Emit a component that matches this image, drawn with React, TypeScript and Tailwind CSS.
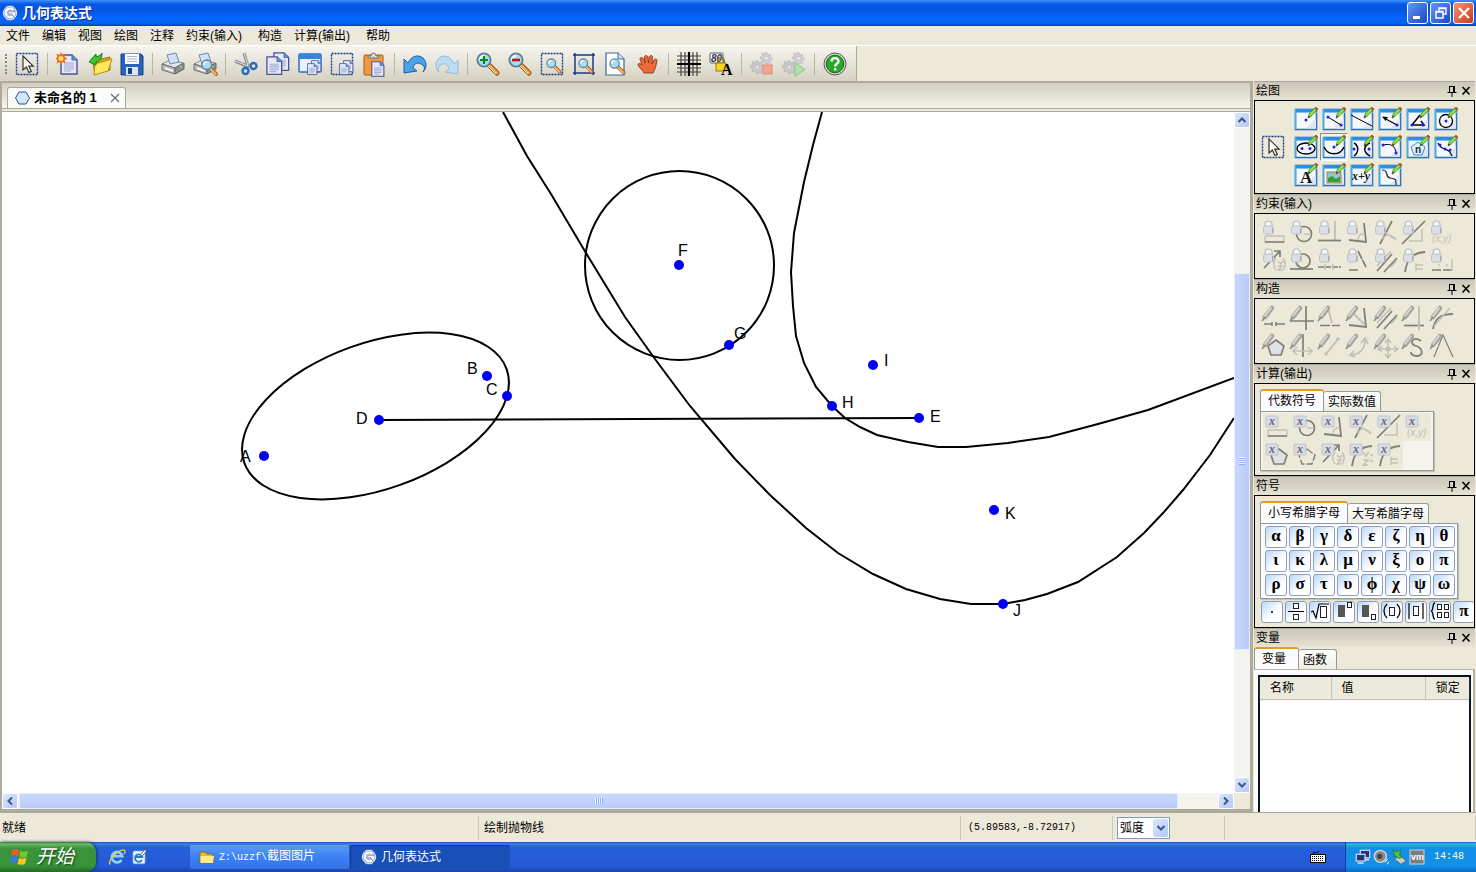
import type { ReactNode } from "react";
import { useState } from "react";

const menus = ["文件", "编辑", "视图", "绘图", "注释", "约束(输入)", "构造", "计算(输出)", "帮助"];

const greek = "αβγδεζηθικλμνξοπρστυϕχψω".split("");

const points = [
  { name: "A", x: 264, y: 456, lx: 240, ly: 462 },
  { name: "B", x: 487, y: 376, lx: 467, ly: 374 },
  { name: "C", x: 507, y: 396, lx: 486, ly: 395 },
  { name: "D", x: 379, y: 420, lx: 356, ly: 424 },
  { name: "E", x: 919, y: 418, lx: 930, ly: 422 },
  { name: "F", x: 679, y: 265, lx: 678, ly: 256 },
  { name: "G", x: 729, y: 345, lx: 734, ly: 339 },
  { name: "H", x: 832, y: 406, lx: 842, ly: 408 },
  { name: "I", x: 873, y: 365, lx: 884, ly: 366 },
  { name: "J", x: 1003, y: 604, lx: 1013, ly: 616 },
  { name: "K", x: 994, y: 510, lx: 1005, ly: 519 },
];

const parabola =
  "503,112 527,156 551,194 586,253 625,317 655,359 690,406 735,459 770,495 806,528 838,553 873,574 906,589 940,599 971,604 1003,604 1025,600 1047,594 1078,582 1117,557 1144,533 1164,512 1183,490 1210,455 1234,418";
const hyperbola =
  "822,112 813,145 804,182 794,233 791,272 793,306 796,336 804,363 816,387 832,406 845,418 860,427 877,435 908,442 938,447 966,447 1008,443 1049,437 1098,424 1148,410 1234,378";

/* ---------- shared icon pieces ---------- */

function Svg({ children, size = 24 }: { children: ReactNode; size?: number }) {
  return (
    <svg width={size} height={size} viewBox="0 0 24 24" fill="none" className="shrink-0 overflow-visible">
      {children}
    </svg>
  );
}

const Arrow = () => (
  <path d="M8 4v14l3.4-3 2.6 5.5 2.3-1.1-2.5-5.3h4.4z" fill="#fff" stroke="#333" strokeWidth="1.2" />
);

const Dashed = () => (
  <rect x="1.5" y="1.5" width="21" height="21" stroke="#1b3a86" strokeWidth="1.4" strokeDasharray="2 1" />
);

const Page = ({ x = 0, y = 0, s = 1 }: { x?: number; y?: number; s?: number }) => (
  <g transform={`translate(${x} ${y}) scale(${s})`}>
    <path d="M1 1h11l5 5v14H1z" fill="#e4e8f8" stroke="#4a5296" strokeWidth="1.4" />
    <path d="M12 1v5h5" fill="#5b9be0" stroke="#4a60a0" />
    <path d="M4 9h10M4 11h10M4 13h10M4 15h10M4 17h7" stroke="#a2abd4" strokeWidth="1.2" />
  </g>
);

const Lens = ({ x = 0, y = 0, s = 1 }: { x?: number; y?: number; s?: number }) => (
  <g transform={`translate(${x} ${y}) scale(${s})`}>
    <path d="M12 12l9 9" stroke="#8a4a14" strokeWidth="5" strokeLinecap="round" />
    <path d="M13 13l8 8" stroke="#f8a650" strokeWidth="3" strokeLinecap="round" />
    <path d="M12 14l8 8" stroke="#fff0d8" strokeWidth="1" />
    <circle cx="8" cy="8" r="6.6" fill="#a8dcf4" stroke="#5f7f98" strokeWidth="1.8" />
    <path d="M4 8a4 4 0 0 1 4-4" stroke="#fff" strokeWidth="2" />
  </g>
);

const Printer = () => (
  <>
    <path d="M1 12l8-4 13 3-8 5z" fill="#e6e6e6" stroke="#888" />
    <path d="M6 3l9-2 3 9-9 2z" fill="#cfe2fb" stroke="#7088b0" />
    <path d="M1 12l13 4v6L1 18z" fill="#bcbcbc" stroke="#707070" />
    <path d="M14 16l9-5v6l-9 5z" fill="#8e8e8e" stroke="#666" />
    <path d="M4 16l8 3" stroke="#fff" strokeWidth="1.5" />
    <circle cx="19.5" cy="14.5" r="1" fill="#6f6" />
  </>
);

const gearPath = "M8 1h2l.5 2 2 1 1.800-1 1.200 1.200-1 2 .8 2 2.200.6v2l-2.200.5-.8 2 1 2-1.300 1.200-1.900-1-1.900.8L10 17H8l-.6-2.200-2-.8-1.900 1-1.300-1.300 1-1.900-.8-2L.5 9.300v-2l2-.6.8-2-1-1.800 1.300-1.200 1.900 1 2-.8z";

const Gears = ({ children }: { children: ReactNode }) => (
  <>
    <g transform="translate(0 8) scale(.8)" fillRule="evenodd">
      <path d={`${gearPath} M9 6a3 3 0 1 0 .1 0z`} fill="#c9c9cd" stroke="#b2b2b8" />
    </g>
    <g transform="translate(10 0) scale(.7)" fillRule="evenodd">
      <path d={`${gearPath} M9 6a3 3 0 1 0 .1 0z`} fill="#d0d0d4" stroke="#b8b8be" />
    </g>
    {children}
  </>
);

const Logo = ({ size = 16 }: { size?: number }) => (
  <Svg size={size}>
    <path d="M7 1h10l6 11-6 11H7L1 12z" fill="#8ea3c8" />
    <circle cx="12" cy="12" r="10" fill="#9fb2d2" stroke="#dfe7f4" strokeWidth="1.500" />
    <path d="M17 7.500a6.500 6.500 0 1 0 1.500 5h-5l6 6" stroke="#fff" strokeWidth="3" />
    <path d="M13 12l6 7" stroke="#5c7298" strokeWidth="1.500" />
  </Svg>
);

/* ---------- main toolbar ---------- */

const toolGroups: { label: string; icon: ReactNode }[][] = [
  [{ label: "选择", icon: <><Dashed /><Arrow /></> }],
  [
    {
      label: "新建",
      icon: (
        <>
          <Page x={4} y={2} />
          <path d="M5 0l1.500 3L9.500 1.500 8.500 5l3 1.500-3 1.500 1 3.500-3-1.500L5 13l-1.500-3L.5 11.500l1-3.500-2-1.500 2-1.500-1-3.500 3 1.500z" fill="#f26a1c" />
          <circle cx="5" cy="6.500" r="2.500" fill="#ffe46a" />
        </>
      ),
    },
    {
      label: "打开",
      icon: (
        <>
          <path d="M4 7l7-2 2 2 9-2v13l-15 4z" fill="#d9a514" stroke="#a77a10" />
          <path d="M7 12l17-5-4 12-14 4z" fill="#fdea5c" stroke="#b98f18" />
          <path d="M1 10L8 2v3c3-1 5-2 6-4 0 6-2 8-6 9v3z" fill="#3ec42c" stroke="#1d7d16" />
        </>
      ),
    },
    {
      label: "保存",
      icon: (
        <>
          <path d="M1 2h20l2 2v19H1z" fill="#2a62bc" stroke="#173f86" />
          <path d="M5 2h14v10H5z" fill="#fafcff" />
          <path d="M7 4.500h10M7 7h10M7 9.500h10" stroke="#a8b4c8" />
          <path d="M6 15h12v8H6z" fill="#dbe6f6" />
          <path d="M8 16h4v6H8z" fill="#1b3f86" />
        </>
      ),
    },
  ],
  [
    { label: "打印", icon: <Printer /> },
    { label: "打印预览", icon: <><Printer /><Lens x={8} y={7} s={0.72} /></> },
  ],
  [
    {
      label: "剪切",
      icon: (
        <>
          <path d="M10 1l4 14M1 9l14 6" stroke="#83878e" strokeWidth="3" />
          <path d="M10 1l4 13M1 9l13 5" stroke="#e4e6ea" strokeWidth="1" />
          <circle cx="11.500" cy="19" r="3" stroke="#2b6cba" strokeWidth="2.400" />
          <circle cx="19.500" cy="14" r="3" stroke="#2b6cba" strokeWidth="2.400" />
        </>
      ),
    },
    { label: "复制", icon: <><Page x={7} y={0} s={0.92} /><Page x={0} y={4} s={0.92} /></> },
    {
      label: "复制窗口",
      icon: (
        <>
          <rect x="1" y="2" width="22" height="18" rx="1" fill="#eaf2fd" stroke="#2c6fc0" strokeWidth="1.500" />
          <path d="M1 2h22v5H1z" fill="#2f86dc" />
          <Page x={13} y={8} s={0.58} /><Page x={9} y={11} s={0.58} />
        </>
      ),
    },
    { label: "复制区域", icon: <><Dashed /><Page x={13} y={8} s={0.58} /><Page x={9} y={11} s={0.58} /></> },
    {
      label: "粘贴",
      icon: (
        <>
          <rect x="2" y="3" width="19" height="20" rx="1" fill="#f19a3c" stroke="#a65d16" />
          <path d="M6 6V4h3a2.500 3 0 0 1 5 0h3v2z" fill="#d8dadd" stroke="#777" />
          <Page x={9} y={9} s={0.76} />
        </>
      ),
    },
  ],
  [
    { label: "撤消", icon: <path d="M1 7v14l13-2-4-3c1-5 5-7 11-2 1 2 0 5-1 6 4-4 4-10 0-14-5-4-12-2-15 5z" fill="#4aa4ec" stroke="#1c5da6" /> },
    { label: "重做", icon: <path d="M23 8v14l-13-2 4-3c-1-5-5-7-10-3-1 2-1 5 0 6-4-4-4-10 0-14 5-4 12-2 15 6z" fill="#bcdcf4" stroke="#94bcdc" /> },
  ],
  [
    { label: "放大", icon: <><Lens /><path d="M8 4v8M4 8h8" stroke="#0b8a10" strokeWidth="2.200" /></> },
    { label: "缩小", icon: <><Lens /><path d="M4 8h8" stroke="#c81414" strokeWidth="2.600" /></> },
    { label: "缩放区域", icon: <><Dashed /><Lens x={6} y={6} s={0.66} /></> },
    {
      label: "缩放所选",
      icon: (
        <>
          <path d="M3 1v22M21 1v22M1 3h22M1 21h22" stroke="#1b3a86" strokeWidth="1.500" />
          <Lens x={6} y={6} s={0.66} />
        </>
      ),
    },
    {
      label: "缩放页面",
      icon: (
        <>
          <path d="M2 1h12l6 6v16H2z" fill="#fff" stroke="#3b66a8" strokeWidth="1.200" />
          <path d="M14 1v6h6" fill="#d6e5f8" stroke="#3b66a8" />
          <Lens x={5} y={6} s={0.7} />
        </>
      ),
    },
    {
      label: "平移",
      icon: (
        <path
          d="M8 21c-1-3-5-5-6-8 0-2 2-2 4 0L4 7c0-2 2.500-2 3.500 0L9 11 8.500 5c0-2 3-2 3.500 0l.5 6 1-6c.5-2 3-2 3 0L16 12l2-4c1-2 3-1 3 .5-1 6-2 9-4 12.500z"
          fill="#ec6a38" stroke="#7a2c10" strokeWidth=".8"
        />
      ),
    },
  ],
  [
    {
      label: "网格",
      icon: (
        <>
          <path d="M4 0v24M8 0v24M16 0v24M20 0v24M0 4h24M0 8h24M0 16h24M0 20h24" stroke="#444" strokeWidth="1.200" />
          <path d="M12 0v24M0 12h24" stroke="#000" strokeWidth="2.200" />
        </>
      ),
    },
    {
      label: "锁定标签",
      icon: (
        <>
          <rect x="1" y="1" width="13" height="10" rx="1" fill="#fff" stroke="#555e74" />
          <text x="2" y="10" fontSize="10" fontStyle="italic" fontWeight="bold" fontFamily="Liberation Sans, sans-serif" fill="#263248">80</text>
          <path d="M9 12V9a3 3 0 0 1 6 0v3" stroke="#8c7a14" strokeWidth="1.800" />
          <rect x="7" y="11" width="10" height="8" fill="#fbd420" stroke="#9a7a10" />
          <text x="12" y="23" fontSize="16" fontWeight="bold" fontFamily="Liberation Serif, serif" fill="#000">A</text>
        </>
      ),
    },
  ],
  [
    { label: "停止", icon: <Gears><rect x="13" y="13" width="9" height="9" fill="#f4a594" stroke="#e08a78" /></Gears> },
    { label: "运行", icon: <Gears><path d="M13 11l10 6.500L13 24z" fill="#b2e4b0" stroke="#86c486" /></Gears> },
  ],
  [
    {
      label: "帮助",
      icon: (
        <>
          <circle cx="12" cy="12" r="11" fill="#d5d5d5" stroke="#5c5c5c" />
          <circle cx="12" cy="12" r="8.800" fill="#2aa828" stroke="#176a17" />
          <path d="M8.500 9.500c0-4.500 7-4.500 7-.3 0 2.500-3.300 2.500-3.300 5.300M12.200 16v2.500" stroke="#fff" strokeWidth="2.400" />
        </>
      ),
    },
  ],
];

function Toolbar() {
  return (
    <div className="flex h-9 shrink-0 border-t border-white">
      <div className="flex items-center border-r border-[#aca899] bg-gradient-to-b from-[#f6f5ef] to-[#d6d2c2] pr-[5px]">
        <div className="flex w-[11px] justify-center">
          <span className="h-5 border-l-2 border-dotted border-[#8e8b7c]" />
        </div>
        {toolGroups.map((group, i) => (
          <div key={i} className="flex items-center">
            {i > 0 && (
              <div className="flex w-[9px] justify-center">
                <span className="h-[22px] w-px bg-[#bab6a6]" />
              </div>
            )}
            {group.map((t) => (
              <button key={t.label} type="button" aria-label={t.label} className="flex h-8 w-8 items-center justify-center">
                <Svg>{t.icon}</Svg>
              </button>
            ))}
          </div>
        ))}
      </div>
    </div>
  );
}

/* ---------- tool panels ---------- */

function PanelHeader({ title }: { title: string }) {
  return (
    <div className="flex h-[19px] shrink-0 items-center justify-between border-t border-[#aca899] bg-gradient-to-b from-[#cbc7b8] to-[#e6e3d3] pr-[3px] pl-[2px]">
      <h2 className="text-xs leading-4">{title}</h2>
      <div className="flex gap-[2px]">
        <button type="button" aria-label={`固定${title}`}>
          <svg width="12" height="12" viewBox="0 0 12 12" fill="none">
            <path d="M3 1.500h6M3.500 1v6M1.500 7.500h9M6 8v4" stroke="#000" />
            <path d="M8 1v6" stroke="#000" strokeWidth="2" />
          </svg>
        </button>
        <button type="button" aria-label={`关闭${title}`}>
          <svg width="12" height="12" viewBox="0 0 12 12" fill="none">
            <path d="M2.500 2l7 7.500M9.500 2l-7 7.500" stroke="#000" strokeWidth="1.600" />
          </svg>
        </button>
      </div>
    </div>
  );
}

function Tabs({ names, active, onPick }: { names: string[]; active: number; onPick: (i: number) => void }) {
  return (
    <div role="tablist" className="flex items-end text-xs leading-4">
      {names.map((n, i) => (
        <button
          key={n}
          type="button"
          role="tab"
          aria-selected={i === active}
          onClick={() => onPick(i)}
          className={
            i === active
              ? "h-[22px] min-w-[45px] rounded-t-[3px] border-x border-t-2 border-x-[#919b9c] border-t-[#e99a24] bg-[#fcfcfe] px-[7px] text-left"
              : "h-5 min-w-[38px] rounded-t-[3px] border border-b-0 border-l-0 border-[#919b9c] bg-gradient-to-b from-white to-[#eeede4] px-1 text-left"
          }
        >
          {n}
        </button>
      ))}
    </div>
  );
}

const Pencil = () => (
  <>
    <path d="M14 11l1.500-5L22 0l2 2-6 6.500z" fill="#8fdc4c" stroke="#3c8a1c" strokeWidth=".8" />
    <path d="M20.500 1.500L22 0l2 2-1.500 1.700z" fill="#d44a2c" />
    <path d="M14 11l.8-2.500 1.500 1.400z" fill="#333" />
  </>
);

const Dot = ({ x, y }: { x: number; y: number }) => <circle cx={x} cy={y} r="1.500" fill="#2222e0" />;

const drawTools: { label: string; icon: ReactNode }[] = [
  { label: "点", icon: <Dot x={12} y={13} /> },
  { label: "线段", icon: <><path d="M6 10l13 8" stroke="#000" /><Dot x={6} y={10} /><Dot x={19} y={18} /></> },
  { label: "直线", icon: <path d="M1 8l21 11" stroke="#000" /> },
  { label: "向量", icon: <><path d="M6 11l13 7" stroke="#000" strokeWidth="1.300" /><path d="M4 9.500l6 .5-2.500 4z" fill="#000" /><Dot x={19} y={18} /></> },
  { label: "多边形", icon: <><path d="M14 8L6 18h12l-3-4" stroke="#000" strokeWidth="1.500" /><Dot x={6} y={18} /><Dot x={17} y={18} /></> },
  { label: "圆", icon: <><circle cx="12" cy="14" r="6.500" stroke="#000" strokeWidth="1.300" /><Dot x={12} y={14} /></> },
  { label: "椭圆", icon: <><ellipse cx="12" cy="13.500" rx="9" ry="5.500" stroke="#000" strokeWidth="1.300" /><Dot x={8} y={13.5} /><Dot x={16} y={13.5} /></> },
  { label: "抛物线", icon: <><path d="M2 12c4 9 16 9 20 0" stroke="#000" strokeWidth="1.500" /><Dot x={12} y={12} /></> },
  { label: "双曲线", icon: <><path d="M4 8c5 3 5 9 0 13M20 8c-7 3-7 9 0 13" stroke="#000" strokeWidth="1.500" /><Dot x={4} y={14} /><Dot x={19} y={14} /></> },
  { label: "圆弧", icon: <><path d="M5 10c8-2 13 1 13 9" stroke="#000" /><Dot x={5} y={10} /><Dot x={18} y={18} /></> },
  {
    label: "正多边形",
    icon: (
      <>
        <path d="M12 7l7 5-3 8H8l-3-8z" fill="#dff4ff" stroke="#2a8cc8" />
        <text x="9" y="18" fontSize="10" fontWeight="bold" fontFamily="Liberation Sans, sans-serif" fill="#224">n</text>
      </>
    ),
  },
  { label: "曲线", icon: <><path d="M4 8c3 6 3 4 7 6s4 1 7 7" stroke="#000" strokeWidth="1.200" /><Dot x={6} y={10} /><Dot x={11} y={14} /><Dot x={16} y={15} /></> },
  { label: "文字", icon: <text x="6" y="20" fontSize="17" fontWeight="bold" fontFamily="Liberation Serif, serif" fill="#111">A</text> },
  {
    label: "图片",
    icon: (
      <>
        <rect x="5" y="9" width="14" height="11" fill="#8cc4f0" stroke="#b07a3c" />
        <path d="M6 15l4-2 4 3 4-3v6H6z" fill="#37a02c" />
        <circle cx="12" cy="12" r="1.500" fill="#f5b43c" />
      </>
    ),
  },
  { label: "表达式", icon: <text x="2" y="17" fontSize="12" fontStyle="italic" fontWeight="bold" fontFamily="Liberation Serif, serif" fill="#111">x+y</text> },
  { label: "函数图象", icon: <path d="M4 7c8 0 2 7 8 8s6 1 6 7" stroke="#222" strokeWidth="1.200" /> },
];

function DrawCard({ label, icon }: { label: string; icon: ReactNode }) {
  return (
    <button
      type="button"
      aria-label={label}
      className={
        label === "抛物线"
          ? "flex h-7 w-7 items-center justify-center border border-white border-t-[#8e8b7c] border-l-[#8e8b7c] bg-[#f4f3ea]"
          : "flex h-7 w-7 items-center justify-center"
      }
    >
      <Svg>
        <rect x="1.500" y="2.500" width="21" height="20" fill="#f6f8fe" stroke="#2c74b8" strokeWidth="1.600" />
        <path d="M12 21.500h10V11z" fill="#dfe4f6" />
        <path d="M1 2h22v4H1z" fill="#2d8ee0" />
        <path d="M1 5.500h22" stroke="#7cc4f4" />
        <path d="M1.500 2v20" stroke="#48b0e8" strokeWidth="1.500" />
        {icon}
        <Pencil />
      </Svg>
    </button>
  );
}

const G = "#7f7f77";
const L = "#c2c0b5";

/* base shapes for the greyed out tools, shared by the constraint and output panels */
const rulerShape = <><path d="M3 15v6h19v-6M3 15h19" stroke={L} strokeWidth="1.300" /><path d="M3 21h19" stroke={G} strokeWidth="1.500" /></>;
const circleShape = <><circle cx="14" cy="13" r="7.500" stroke={G} strokeWidth="1.700" /><path d="M14 13h7" stroke={L} strokeWidth="1.500" /></>;
const perpShape = <><path d="M17 0v20" stroke={L} strokeWidth="1.800" /><path d="M0 19.500h23" stroke={G} strokeWidth="1.700" /></>;
const angleShape = <><path d="M3 19l17 2-2-19" stroke={G} strokeWidth="1.800" /><path d="M12 19c0-5 3-7 7-6" stroke={L} strokeWidth="1.300" /></>;
const crossShape = <><path d="M6 23L18 0" stroke={G} strokeWidth="1.700" /><path d="M2 5l20 14M8 18c5-6 8-5 14 0" stroke={L} strokeWidth="1.300" /></>;
const slopeShape = <><path d="M0 23L23 0" stroke={G} strokeWidth="1.700" /><path d="M7 20h13V8" stroke={L} strokeWidth="1.500" /></>;
const coordShape = <text x="2" y="21" fontSize="10" fontStyle="italic" fontFamily="Liberation Sans, sans-serif" fill={L}>(x,y)</text>;
const vectorShape = <><path d="M2 19L18 2M18 8V2h-6" stroke={G} strokeWidth="1.700" /><path d="M14 9c-3 4-3 8 0 12M21 9c3 4 3 8 0 12M16 12l3 3 2-3M16 17h4l-4 4h4" stroke={L} strokeWidth="1.400" /></>;
const tangentShape = <><circle cx="13" cy="12" r="7" stroke={G} strokeWidth="1.700" /><path d="M0 20h23" stroke={G} strokeWidth="1.700" /></>;
const onLineShape = <><path d="M0 18h23" stroke={G} strokeWidth="1.500" strokeDasharray="6 1" /><path d="M7 15v6M15 15v6" stroke={L} strokeWidth="1.500" /></>;
const equalShape = <path d="M3 21h9M12 2l8 16" stroke={G} strokeWidth="1.700" strokeDasharray="9 1" />;
const parallelShape = <><path d="M3 22L18 5M10 23L23 9" stroke={G} strokeWidth="1.700" /><path d="M3 17L17 2M17 18l6-7" stroke={L} strokeWidth="1.500" /></>;
const curveShape = <path d="M3 23C5 10 10 4 23 3" stroke={G} strokeWidth="1.800" />;
const tMark = <path d="M14 14v8M14 16h7M14 20h7" stroke={L} strokeWidth="1.400" />;
const pentagonShape = <path d="M14 6l8 6-3 9H9l-3-9z" fill="#dfe1e6" stroke={G} strokeWidth="1.700" />;

const Lock = () => (
  <>
    <path d="M3 6V3.500a3.500 3.500 0 0 1 7 0V6" stroke="#b9bbc0" strokeWidth="1.200" fill="#f4f5f8" />
    <rect x="1.500" y="5" width="10" height="8" rx="2" fill="#dcdee4" stroke="#c0c2c6" />
    <path d="M10.500 7v5" stroke="#a9abb0" />
  </>
);

const Brush = () => (
  <>
    <path d="M3 11l7-9" stroke="#a6a59e" strokeWidth="4.500" strokeLinecap="round" />
    <path d="M3 10l6-8" stroke="#d5d6d8" strokeWidth="2" strokeLinecap="round" />
    <path d="M0 15l3-4" stroke="#8c8c86" strokeWidth="1.500" />
  </>
);

const XBadge = () => (
  <>
    <rect x="1" y="1" width="12" height="11" rx="1" fill="#dadce5" stroke="#c0c3ce" />
    <text x="4" y="10" fontSize="12" fontStyle="italic" fontWeight="bold" fontFamily="Liberation Serif, serif" fill="#64687a">x</text>
  </>
);

const constraintTools = [
  rulerShape, circleShape, perpShape, angleShape, crossShape, slopeShape, coordShape,
  vectorShape, tangentShape, onLineShape, equalShape, parallelShape, <>{curveShape}{tMark}</>,
  <><path d="M2 21h20" stroke={G} strokeWidth="1.500" strokeDasharray="9 2" /><path d="M22 10v12M8 16h2M16 16h2" stroke={L} strokeWidth="1.500" /></>,
];

const constructTools = [
  <path d="M2 18h8M14 18h9M10 16v4M14 16v4" stroke={G} strokeWidth="1.500" />,
  <path d="M0 15h24M16 0v24" stroke={G} strokeWidth="1.700" />,
  <><path d="M10 2l4 15" stroke={L} strokeWidth="1.800" /><path d="M2 19.500h20" stroke={G} strokeWidth="1.700" strokeDasharray="10 2" /></>,
  <><path d="M3 19l17 2-2-19" stroke={G} strokeWidth="1.800" /><path d="M5 5l14 14" stroke={L} strokeWidth="1.800" /></>,
  parallelShape,
  <><path d="M2 19.500h20" stroke={G} strokeWidth="1.700" /><path d="M17 0v24" stroke={L} strokeWidth="2" /></>,
  <><path d="M3 23C5 12 11 8 23 8" stroke={G} strokeWidth="1.800" /><path d="M4 20L20 2" stroke={L} strokeWidth="1.600" /></>,
  pentagonShape,
  <><path d="M13 0v23" stroke={G} strokeWidth="1.700" /><path d="M3 17h19M7 13l-4 4 4 4M18 13l4 4-4 4" stroke={L} strokeWidth="1.500" /></>,
  <><path d="M8 20L20 5" stroke={L} strokeWidth="2" /><circle cx="8" cy="20" r="1.800" fill={L} /><circle cx="20" cy="5" r="1.800" fill={L} /></>,
  <path d="M5 21c8 0 14-6 14-15M15 9l4-5 3 6M8 17l-4 4 5 2" stroke={L} strokeWidth="1.700" />,
  <><path d="M14 6v17M5 15h18M11 9l3-4 3 4M11 20l3 4 3-4M8 12l-4 3 4 3M20 12l4 3-4 3" stroke={L} strokeWidth="1.500" /><circle cx="14" cy="15" r="2.500" fill={L} /></>,
  <path d="M19 7c-8-6-13 3-5 5 7 2 8 10 1 10-4 0-6-2-6-4" stroke={G} strokeWidth="1.800" />,
  <path d="M4 23L13 1l10 22" stroke={G} strokeWidth="1.200" />,
];

const outputTools = [
  rulerShape, circleShape, angleShape, crossShape, slopeShape, coordShape,
  pentagonShape,
  <path d="M14 6l8 6-3 9H9l-3-9z" stroke={G} strokeWidth="1.400" strokeDasharray="7 2" />,
  vectorShape,
  <>{curveShape}<path d="M14 9l3 4 3-4M14 17h5l-5 5h5M21 12h3M21 18h3" stroke={L} strokeWidth="1.400" /></>,
  <>{curveShape}{tMark}</>,
];

function GreyGrid({ tools, mark, label }: { tools: ReactNode[]; mark: ReactNode; label: string }) {
  return (
    <div className="grid grid-cols-[repeat(7,28px)] border border-black px-[5px] pt-[5px] pb-[3px]">
      {tools.map((t, i) => (
        <button key={i} type="button" disabled aria-label={`${label} ${i + 1}`} className="flex h-7 w-7 items-center justify-center">
          <Svg>{t}{mark}</Svg>
        </button>
      ))}
    </div>
  );
}

const Box = ({ x, y, w = 5, h = 6 }: { x: number; y: number; w?: number; h?: number }) => (
  <rect x={x} y={y} width={w} height={h} fill="#fff" stroke="#222" />
);

const mathKeys: { label: string; icon: ReactNode }[] = [
  { label: "点乘", icon: <circle cx="10" cy="11" r="1" fill="#000" /> },
  { label: "分数", icon: <><Box x={7.5} y={2.5} h={5} /><path d="M2 10.500h16" stroke="#000" /><Box x={7.5} y={13.5} h={5} /></> },
  { label: "根号", icon: <><path d="M1 11l2-1 3 7L9 3h10" stroke="#000" strokeWidth="1.200" /><Box x={10.5} y={5.5} w={6} h={11} /></> },
  { label: "上标", icon: <><rect x="4" y="4" width="7" height="12" fill="#555" /><Box x={13.5} y={1.5} w={4} h={5} /></> },
  { label: "下标", icon: <><rect x="4" y="4" width="7" height="12" fill="#555" /><Box x={13.5} y={13.5} w={4} h={5} /></> },
  { label: "括号", icon: <><path d="M5 3c-4 4-4 10 0 14M15 3c4 4 4 10 0 14" stroke="#000" strokeWidth="1.300" /><Box x={7.5} y={6.5} h={8} /></> },
  { label: "绝对值", icon: <><path d="M3 2v16M17 2v16" stroke="#000" strokeWidth="1.200" /><Box x={7.5} y={5.5} h={9} /></> },
  { label: "分段", icon: <><path d="M5 2c-3 0-1 6-3.500 8C4 12 2 18 5 18" stroke="#000" strokeWidth="1.300" /><Box x={7.5} y={3.5} w={4} h={5} /><Box x={14.5} y={3.5} w={4} h={5} /><Box x={7.5} y={11.5} w={4} h={5} /><Box x={14.5} y={11.5} w={4} h={5} /></> },
];

const keyClass =
  "flex h-[22px] w-[22px] shrink-0 items-center justify-center rounded-[3px] border border-[#8f9cc0] bg-gradient-to-br from-[#b9d8fb] to-white to-60% pb-[2px] font-['Liberation_Serif',serif] text-[17px] leading-4 font-bold";

function Sidebar() {
  const [calcTab, setCalcTab] = useState(0);
  const [greekTab, setGreekTab] = useState(0);
  const [varTab, setVarTab] = useState(0);

  return (
    <aside className="flex w-[223px] shrink-0 flex-col overflow-hidden px-px">
      <PanelHeader title="绘图" />
      <div className="flex items-center gap-[5px] border border-black py-1 pl-1">
        <button type="button" aria-label="选择" className="flex h-7 w-7 items-center justify-center">
          <Svg><Dashed /><Arrow /></Svg>
        </button>
        <div className="grid grid-cols-[repeat(6,28px)]">
          {drawTools.map((t) => <DrawCard key={t.label} {...t} />)}
        </div>
      </div>

      <PanelHeader title="约束(输入)" />
      <GreyGrid tools={constraintTools} mark={<Lock />} label="约束" />

      <PanelHeader title="构造" />
      <GreyGrid tools={constructTools} mark={<Brush />} label="构造" />

      <PanelHeader title="计算(输出)" />
      <div className="border border-black px-[5px] pt-[5px] pb-1">
        <Tabs names={["代数符号", "实际数值"]} active={calcTab} onPick={setCalcTab} />
        <div className="w-[174px] border border-[#919b9c] bg-[#f4f3ee] px-[2px] py-px shadow-[1px_1px_1px_#c4c1b2]">
          <div className="grid grid-cols-[repeat(6,28px)]">
            {outputTools.map((t, i) => (
              <button key={i} type="button" disabled aria-label={`输出 ${i + 1}`} className="flex h-7 w-7 items-center justify-center bg-[#ece9d8]">
                <Svg>{t}<XBadge /></Svg>
              </button>
            ))}
          </div>
        </div>
      </div>

      <PanelHeader title="符号" />
      <div className="overflow-hidden border border-black px-[5px] pt-[5px] pb-1">
        <Tabs names={["小写希腊字母", "大写希腊字母"]} active={greekTab} onPick={setGreekTab} />
        <div className="grid w-[198px] grid-cols-[repeat(8,22px)] gap-[2px] border border-[#919b9c] bg-[#fcfcfe] px-1 py-[2px] shadow-[1px_1px_1px_#c4c1b2]">
          {greek.map((g) => (
            <button key={g} type="button" className={keyClass}>{greekTab ? g.toUpperCase() : g}</button>
          ))}
        </div>
        <div className="mt-[2px] flex gap-[2px] pl-px">
          {mathKeys.map((k) => (
            <button key={k.label} type="button" aria-label={k.label} className={keyClass}>
              <svg width="20" height="20" viewBox="0 0 20 20" fill="none" className="shrink-0">{k.icon}</svg>
            </button>
          ))}
          <button type="button" className={keyClass}>π</button>
        </div>
      </div>

      <PanelHeader title="变量" />
      <div className="flex min-h-0 flex-1 flex-col">
        <Tabs names={["变量", "函数"]} active={varTab} onPick={setVarTab} />
        <div className="flex min-h-0 flex-1 flex-col border-t border-r-2 border-[#b5b2a4] bg-[#fcfcfe] pt-[5px] pr-[2px] pl-1">
          <div className="min-h-0 flex-1 border-2 border-b-0 border-[#0a1420] bg-white">
            <table className="w-full table-fixed text-left text-xs leading-4">
              <thead>
                <tr className="h-[22px] bg-[#ebeadb] shadow-[0_1px_1px_#c4c1b2]">
                  <th className="w-[34%] border-r border-[#c7c5b2] pl-[10px] font-normal">名称</th>
                  <th className="border-r border-[#c7c5b2] pl-[10px] font-normal">值</th>
                  <th className="w-[21%] pl-[10px] font-normal">锁定</th>
                </tr>
              </thead>
              <tbody />
            </table>
          </div>
        </div>
      </div>
    </aside>
  );
}

/* ---------- drawing area ---------- */

function ScrollButton({ label, d }: { label: string; d: string }) {
  return (
    <button type="button" aria-label={label} className="flex h-4 w-4 shrink-0 items-center justify-center rounded-[2px] border border-white bg-gradient-to-br from-[#dbe6fe] to-[#b4c8f6]">
      <svg width="10" height="10" viewBox="0 0 10 10" fill="none">
        <path d={d} stroke="#3f5680" strokeWidth="2" />
      </svg>
    </button>
  );
}

function Drawing() {
  return (
    <svg className="h-full w-full" role="img" aria-label="几何图形">
      <g transform="translate(-2 -112)" fill="none" stroke="#000" strokeWidth="2">
        <ellipse cx="375.500" cy="416" rx="139.300" ry="73.200" transform="rotate(-19.700 375.500 416)" />
        <circle cx="679.500" cy="265.500" r="94.500" />
        <polyline points={parabola} />
        <polyline points={hyperbola} />
        <path d="M379 420L919 418" />
        {points.map((p) => (
          <g key={p.name} stroke="none">
            <circle cx={p.x} cy={p.y} r="5" fill="#0000f4" />
            <text x={p.lx} y={p.ly} fill="#000" fontSize="16" fontFamily="Liberation Sans, Arial, sans-serif">{p.name}</text>
          </g>
        ))}
      </g>
    </svg>
  );
}

function Editor() {
  return (
    <section className="flex min-w-0 flex-1 flex-col border-t-2 border-r-[3px] border-b-[3px] border-l-2 border-[#aeab9c]">
      <div className="flex h-[25px] shrink-0 items-end bg-gradient-to-b from-[#d3cfbf] to-[#f5f4ee] pl-[5px]">
        <div className="flex h-[21px] items-center rounded-t-[3px] border border-b-0 border-[#aca899] bg-[#fcfcfa] pr-1 pl-[7px]">
          <svg width="15" height="14" viewBox="0 0 15 14">
            <path d="M4 1h7l3.500 6L11 13H4L.5 7z" fill="#cfe6fc" stroke="#27548c" />
          </svg>
          <span className="ml-1 text-[13px] leading-4 font-bold">未命名的 1</span>
          <button type="button" aria-label="关闭标签" className="ml-3">
            <svg width="12" height="12" viewBox="0 0 12 12" fill="none">
              <path d="M2 2l8 8M10 2l-8 8" stroke="#6e6e6e" strokeWidth="1.300" />
            </svg>
          </button>
        </div>
      </div>
      <div className="h-1 shrink-0 border-y border-[#aca899] bg-[#ece9d8]" />
      <div className="flex min-h-0 flex-1">
        <div className="min-w-0 flex-1 overflow-hidden bg-white"><Drawing /></div>
        <div className="flex w-4 flex-col bg-[#f4f3ee]">
          <ScrollButton label="向上滚动" d="M1.500 7L5 3.500 8.500 7" />
          <div className="grow-[147]" />
          <div className="flex grow-[372] flex-col items-center justify-center rounded-[2px] border border-[#e4ecff] bg-gradient-to-r from-[#c9d8fc] to-[#b9cbf8]">
            <span className="h-2 w-[6px] bg-[repeating-linear-gradient(to_bottom,#eef4fe_0_1px,#8cb0f8_1px_2px)]" />
          </div>
          <div className="grow-[129]" />
          <ScrollButton label="向下滚动" d="M1.500 3L5 6.500 8.500 3" />
        </div>
      </div>
      <div className="flex h-4 shrink-0 bg-[#f4f3ee]">
        <ScrollButton label="向左滚动" d="M7 1.500L3.500 5 7 8.500" />
        <div className="grow-[1]" />
        <div className="flex grow-[1158] items-center justify-center rounded-[2px] border border-[#e4ecff] bg-gradient-to-b from-[#c9d8fc] to-[#b9cbf8]">
          <span className="h-[6px] w-2 bg-[repeating-linear-gradient(to_right,#eef4fe_0_1px,#8cb0f8_1px_2px)]" />
        </div>
        <div className="grow-[40]" />
        <ScrollButton label="向右滚动" d="M3 1.500L6.500 5 3 8.500" />
        <div className="w-4 bg-[#ece9d8]" />
      </div>
    </section>
  );
}

/* ---------- status bar and taskbar ---------- */

function StatusBar() {
  return (
    <footer className="flex h-[30px] shrink-0 items-center border-t border-[#aca899] text-xs leading-4">
      <div className="flex h-6 flex-1 items-center border-r border-[#c9c6b6] pl-[2px]">就绪</div>
      <div className="flex h-6 flex-1 items-center border-r border-[#c9c6b6] pl-[5px]">绘制抛物线</div>
      <div className="flex h-6 w-[152px] items-center border-r border-[#c9c6b6] pl-[7px] font-['Liberation_Mono',monospace] text-[10px]">(5.89583,-8.72917)</div>
      <div className="flex h-6 w-28 items-center border-r border-[#c9c6b6] pl-1">
        <div className="relative">
          <select aria-label="角度单位" className="h-[22px] w-[53px] appearance-none border border-[#7f9db9] bg-white pl-[2px] text-xs leading-4">
            <option>弧度</option>
            <option>角度</option>
          </select>
          <span className="pointer-events-none absolute top-[2px] right-[2px] flex h-[18px] w-[15px] items-center justify-center rounded-[2px] bg-gradient-to-br from-[#dbe6fe] to-[#b4c8f6]">
            <svg width="10" height="10" viewBox="0 0 10 10" fill="none">
              <path d="M1.500 3L5 6.500 8.500 3" stroke="#3f5680" strokeWidth="2" />
            </svg>
          </span>
        </div>
      </div>
      <div className="h-6 w-[251px] border-r border-[#c9c6b6]" />
    </footer>
  );
}

function Taskbar() {
  return (
    <div className="flex h-[30px] shrink-0 items-stretch bg-[linear-gradient(to_bottom,#1f50b8_0,#3a80f0_2px,#2560dc_5px,#2459d8_24px,#1b44a8_30px)] text-xs leading-4 text-white">
      <button type="button" className="flex w-24 items-center gap-[6px] rounded-r-[10px] bg-[linear-gradient(to_bottom,#2c7a2c_0,#6cbc68_2px,#3a953a_6px,#389238_24px,#236a23_30px)] pl-[10px] shadow-[1px_0_3px_#12307c]">
        <svg width="20" height="20" viewBox="0 0 20 20">
          <path d="M2 3c2-1 5-1 7 0L8 9C6 8 3 8 1 9z" fill="#f05a28" />
          <path d="M10 4c2 1 5 1 8 0l-1.500 6c-2 1-5 1-7 0z" fill="#7cc82c" />
          <path d="M1 10c2-1 5-1 7 0l-1.500 6c-2-1-4-1-6.500 0z" fill="#3a78e8" />
          <path d="M9 11c2 1 5 1 7.500 0L15 17c-2 1-5 1-7.500 0z" fill="#fcc820" />
        </svg>
        <span className="text-[19px] leading-6 italic [text-shadow:1px_1px_2px_#123c12]">开始</span>
      </button>
      <div className="flex w-[94px] items-center gap-1 pl-3">
        <button type="button" aria-label="Internet Explorer">
          <Svg size={18}>
            <path d="M18 16a7 7 0 1 1 1-5H7" stroke="#8fd0fc" strokeWidth="3.500" />
            <path d="M3 22C-2 18 14 1 22 3c2 1 0 4-1 5" stroke="#f4c83c" strokeWidth="1.800" />
          </Svg>
        </button>
        <button type="button" aria-label="显示桌面">
          <Svg size={18}>
            <rect x="4" y="4" width="16" height="17" rx="2" fill="#e8f2fc" stroke="#88b4e0" />
            <path d="M16 16a5 5 0 1 1 .5-4H8" stroke="#2a7cc8" strokeWidth="2.400" />
            <path d="M14 9l6-7 2 2-6 7z" fill="#fff" stroke="#445" />
          </Svg>
        </button>
      </div>
      <div className="flex items-center gap-px">
        <button type="button" className="flex h-6 w-[159px] items-center gap-1 rounded-[2px] bg-gradient-to-b from-[#5a9bfc] via-[#3c81f3] to-[#3472e6] pl-[9px]">
          <svg width="16" height="16" viewBox="0 0 16 16">
            <path d="M1 3h5l2 2h6v9H1z" fill="#e8b83c" stroke="#8c6a14" />
            <path d="M1.500 7h13.500l-1 7H1.500z" fill="#fdeb8c" />
          </svg>
          <span><span className="font-['Liberation_Mono',monospace] text-[10px]">Z:\uzzf\</span>截图图片</span>
        </button>
        <button type="button" className="flex h-6 w-40 items-center gap-1 rounded-[2px] bg-[#1b4fb8] pl-[11px] shadow-[inset_1px_1px_1px_#123a90]">
          <Logo />
          <span>几何表达式</span>
        </button>
      </div>
      <div className="flex-1" />
      <div className="flex w-[35px] items-center">
        <svg width="16" height="14" viewBox="0 0 16 14" fill="none">
          <path d="M3 4c0-3 5 0 6-3" stroke="#000" />
          <rect x=".5" y="4.500" width="15" height="8" fill="#fff" stroke="#000" />
          <path d="M2 6.500h12M2 8.500h12M2 10.500h12" stroke="#000" strokeDasharray="1 1" />
        </svg>
      </div>
      <div className="flex w-[131px] items-center border-l border-[#0c3c9c] bg-[linear-gradient(to_bottom,#0c6ccc_0,#2cb4f4_2px,#1290e8_6px,#1290e8_24px,#0c68c0_30px)] pr-3 pl-[9px]">
        <div className="flex items-center gap-[2px]">
          <Svg size={16}>
            <rect x="8" y="2" width="14" height="11" fill="#20347c" stroke="#c8d0e4" strokeWidth="2" />
            <rect x="2" y="8" width="13" height="10" fill="#20347c" stroke="#c8d0e4" strokeWidth="2" />
            <path d="M4 21h9M15 16h6" stroke="#d8dce8" strokeWidth="2.500" />
          </Svg>
          <Svg size={16}>
            <circle cx="11" cy="11" r="9" fill="#8a8a8a" stroke="#d8d8d8" strokeWidth="2" />
            <circle cx="10" cy="11" r="4" fill="#444" />
            <path d="M18 20l4-5M21 23l3-4" stroke="#fff" strokeWidth="1.500" />
          </Svg>
          <Svg size={16}>
            <path d="M5 15l10 8 8-5-9-8z" fill="#c4c8d0" stroke="#444" />
            <path d="M2 1l6 3 6-2-1 7 3 4-5 1-4-4-3 1 1-5z" fill="#4cc43c" stroke="#1c6c1c" />
          </Svg>
          <svg width="16" height="16" viewBox="0 0 16 16">
            <rect x="1" y="1" width="14" height="14" fill="#7c7c80" stroke="#d4d4d4" />
            <text x="2" y="11" fontSize="9" fontWeight="bold" fontFamily="Liberation Sans, sans-serif" fill="#fff">vm</text>
          </svg>
        </div>
        <span className="ml-auto font-['Liberation_Mono',monospace] text-[10px]">14:48</span>
      </div>
    </div>
  );
}

export default function App() {
  const winButton = "flex h-[22px] w-[21px] items-center justify-center rounded-[3px] border border-white bg-gradient-to-br";
  return (
    <div className="flex h-dvh flex-col bg-[#ece9d8] font-['Liberation_Sans','Noto_Sans_CJK_SC',sans-serif] text-black">
      <header className="flex h-[26px] shrink-0 items-center bg-[linear-gradient(to_bottom,#3c94fc_0,#0858e4_4px,#0554e0_10px,#0466fc_18px,#0462f4_23px,#0340b4_26px)] pr-[2px] pl-[2px]">
        <Logo />
        <h1 className="ml-1 text-sm leading-5 font-bold text-white [text-shadow:1px_1px_0_#0a2a7c]">几何表达式</h1>
        <div className="ml-auto flex gap-[2px]">
          <button type="button" aria-label="最小化" className={`${winButton} from-[#6a94f4] to-[#1c44c8]`}>
            <svg width="14" height="14" viewBox="0 0 14 14"><path d="M2 10h7v3H2z" fill="#fff" /></svg>
          </button>
          <button type="button" aria-label="还原" className={`${winButton} from-[#6a94f4] to-[#1c44c8]`}>
            <svg width="14" height="14" viewBox="0 0 14 14" fill="none">
              <path d="M5 5V2h7v6H9M5 2.500h7" stroke="#fff" strokeWidth="1.400" />
              <path d="M2 5.500h7V12H2zM2 6h7" stroke="#fff" strokeWidth="1.400" />
            </svg>
          </button>
          <button type="button" aria-label="关闭" className={`${winButton} from-[#f09478] to-[#c83410]`}>
            <svg width="14" height="14" viewBox="0 0 14 14" fill="none"><path d="M2 2l10 10M12 2L2 12" stroke="#fff" strokeWidth="2.200" /></svg>
          </button>
        </div>
      </header>

      <nav className="flex h-[19px] shrink-0 items-center text-xs leading-4">
        {menus.map((m) => (
          <button key={m} type="button" className={m.length > 2 ? "w-[72px] px-[6px] text-left" : "w-9 px-[6px] text-left"}>{m}</button>
        ))}
      </nav>

      <Toolbar />

      <main className="flex min-h-0 flex-1">
        <Editor />
        <Sidebar />
      </main>

      <StatusBar />
      <Taskbar />
    </div>
  );
}
